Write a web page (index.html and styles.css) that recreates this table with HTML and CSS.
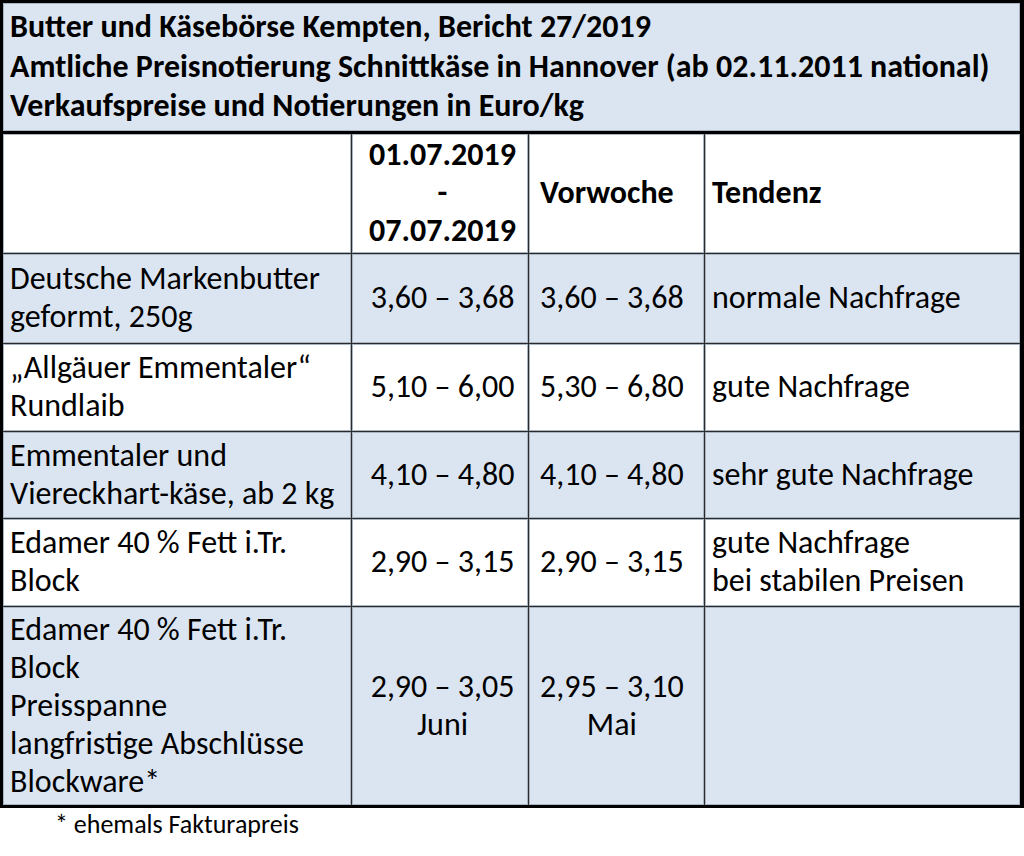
FILE: index.html
```html
<!DOCTYPE html>
<html lang="de">
<head>
<meta charset="utf-8">
<title>Butter und Käsebörse Kempten</title>
<link rel="stylesheet" href="styles.css">
</head>
<body>
<table class="report">
  <colgroup>
    <col class="c1"><col class="c2"><col class="c3"><col class="c4">
  </colgroup>
  <tr class="title-row">
    <td colspan="4" class="title">Butter und Käsebörse Kempten, Bericht 27/2019<br>Amtliche Preisnotierung Schnittkäse in Hannover (ab 02.11.2011 national)<br>Verkaufspreise und Notierungen in Euro/kg</td>
  </tr>
  <tr class="head-row">
    <td></td>
    <td class="head center">01.07.2019<br>-<br>07.07.2019</td>
    <td class="head left3">Vorwoche</td>
    <td class="head left4">Tendenz</td>
  </tr>
  <tr class="row r1 blue">
    <td class="name">Deutsche Markenbutter<br>geformt, 250g</td>
    <td class="center">3,60 – 3,68</td>
    <td class="left3">3,60 – 3,68</td>
    <td class="left4">normale Nachfrage</td>
  </tr>
  <tr class="row r2">
    <td class="name">„Allgäuer Emmentaler“<br>Rundlaib</td>
    <td class="center">5,10 – 6,00</td>
    <td class="left3">5,30 – 6,80</td>
    <td class="left4">gute Nachfrage</td>
  </tr>
  <tr class="row r3 blue">
    <td class="name">Emmentaler und<br>Viereckhart-käse, ab 2 kg</td>
    <td class="center">4,10 – 4,80</td>
    <td class="left3">4,10 – 4,80</td>
    <td class="left4">sehr gute Nachfrage</td>
  </tr>
  <tr class="row r4">
    <td class="name"><div class="clip">Edamer 40 % Fett i.Tr.<br>Block</div></td>
    <td class="center">2,90 – 3,15</td>
    <td class="left3">2,90 – 3,15</td>
    <td class="left4">gute Nachfrage<br>bei stabilen Preisen</td>
  </tr>
  <tr class="row r5 blue">
    <td class="name">Edamer 40 % Fett i.Tr.<br>Block<br>Preisspanne<br>langfristige Abschlüsse<br>Blockware*</td>
    <td class="center">2,90 – 3,05<br>Juni</td>
    <td class="left3"><span class="stack">2,95 – 3,10<br>Mai</span></td>
    <td class="left4"></td>
  </tr>
</table>
<p class="note">* ehemals Fakturapreis</p>
</body>
</html>
```

FILE: styles.css
```css
html, body {
  margin: 0;
  padding: 0;
  background: #ffffff;
}

body {
  font-family: "Carlito", "Calibri", "Open Sans", sans-serif;
  color: #000000;
}

.report {
  width: 1024px;
  table-layout: fixed;
  border-collapse: collapse;
  border: 3px solid #000000;
  border-right-width: 4px;
  font-size: 32px;
  line-height: 38px;
}

.c1 { width: 350px; }
.c2 { width: 177px; }
.c3 { width: 176px; }
.c4 { width: auto; }

.report td {
  border: 1px solid #2b2b2b;
  padding: 0;
  vertical-align: middle;
  box-shadow: inset 0 0 0 1px #a9b4c2;
  white-space: nowrap;
}

.title-row td {
  background: #dbe5f1;
  font-weight: bold;
  padding: 4px 0 5px 7px;
  line-height: 39.5px;
  border-bottom: 3px solid #000000;
}

.head-row {
  height: 121px;
}

.head {
  font-weight: bold;
}

.r1 { height: 90px; }
.r2 { height: 88px; }
.r3 { height: 87px; }
.r4 { height: 88px; }
.r5 { height: 200px; }

.blue td {
  background: #dbe5f1;
}

.name {
  padding-left: 7px !important;
}

.center {
  text-align: center;
  padding-left: 5px !important;
}

.left3 {
  padding-left: 11px !important;
}

.left4 {
  padding-left: 7px !important;
}

.stack {
  display: inline-block;
  text-align: center;
}

.clip {
  max-height: 86px;
  overflow: hidden;
}

.note {
  margin: 0 0 0 55px;
  font-size: 26px;
  line-height: 32px;
}
```
